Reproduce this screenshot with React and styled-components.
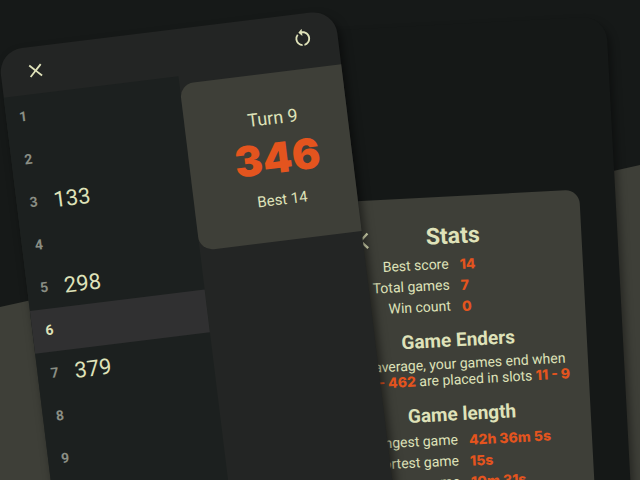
import React from "react";
import styled, { createGlobalStyle } from "styled-components";
import { MdClose, MdRestartAlt } from "react-icons/md";

const COLORS = {
  background: "#161918",
  screen: "#151817",
  phone: "#232524",
  list: "#1c201f",
  active: "#303031",
  card: "#3e3f38",
  text: "#dfe2b9",
  muted: "#8a8e84",
  accent: "#e4541e",
};

const SLOTS = [null, null, 133, null, 298, null, 379, null, null];
const ACTIVE_SLOT = 6;

const SCORES = [
  ["Best score", "14"],
  ["Total games", "7"],
  ["Win count", "0"],
];

const LENGTHS = [
  ["Longest game", "42h 36m 5s"],
  ["Shortest game", "15s"],
  ["Average game", "10m 31s"],
];

const StatList = ({ items }) => (
  <Stats>
    {items.map(([label, value]) => (
      <React.Fragment key={label}>
        <StatLabel>{label}</StatLabel>
        <StatValue>{value}</StatValue>
      </React.Fragment>
    ))}
  </Stats>
);

const StatsPhone = () => (
  <BackPhone>
    <StatsCard>
      <StatsHeader>
        <IconButton aria-label="Close stats">
          <MdClose size={28} />
        </IconButton>
        <Title>Stats</Title>
      </StatsHeader>
      <StatList items={SCORES} />
      <Heading>Game Enders</Heading>
      <Summary>
        On average, your games end when <Accent>431 - 462</Accent> are placed
        in slots <Accent>11 - 9</Accent>
      </Summary>
      <Heading>Game length</Heading>
      <StatList items={LENGTHS} />
    </StatsCard>
  </BackPhone>
);

const GamePhone = () => (
  <FrontPhone>
    <Toolbar>
      <IconButton aria-label="Quit game">
        <MdClose size={22} />
      </IconButton>
      <IconButton aria-label="Restart game">
        <MdRestartAlt size={22} />
      </IconButton>
    </Toolbar>
    <Board>
      <SlotList>
        {SLOTS.map((value, i) => (
          <Slot key={i} $active={i + 1 === ACTIVE_SLOT}>
            <SlotNumber $active={i + 1 === ACTIVE_SLOT}>{i + 1}</SlotNumber>
            <SlotValue>{value}</SlotValue>
          </Slot>
        ))}
      </SlotList>
      <TurnCard>
        <Turn>Turn 9</Turn>
        <Draw>346</Draw>
        <Best>Best 14</Best>
      </TurnCard>
    </Board>
  </FrontPhone>
);

const App = () => {
  return (
    <Stage>
      <GlobalStyle />
      <Slope />
      <StatsPhone />
      <GamePhone />
    </Stage>
  );
};

const GlobalStyle = createGlobalStyle`
  * {
    box-sizing: border-box;
  }

  body {
    margin: 0;
    background-color: ${COLORS.background};
    color: ${COLORS.text};
    font-family: Roboto, "Liberation Sans", sans-serif;
  }
`;

const Stage = styled.main`
  position: relative;
  height: 100vh;
  overflow: hidden;
`;

/* slanted ground behind the phones */
const Slope = styled.div`
  position: absolute;
  top: 64%;
  left: 0;
  width: 100%;
  height: 150%;
  background-color: ${COLORS.card};
  transform: skewY(-12.5deg);
  transform-origin: top left;
`;

const Phone = styled.section`
  position: absolute;
  min-height: 130vh;
  border-radius: 24px;
`;

const BackPhone = styled(Phone)`
  top: 16px;
  right: 34px;
  width: 52%;
  padding: 172px 36px 0;
  background-color: ${COLORS.screen};
  box-shadow: 3px 6px 8px rgba(0, 0, 0, 0.4);
  transform: rotate(-3deg);
  transform-origin: top right;
`;

const FrontPhone = styled(Phone)`
  top: 51px;
  left: -2px;
  width: 53%;
  background-color: ${COLORS.phone};
  box-shadow: 3px 6px 10px rgba(0, 0, 0, 0.5);
  transform: rotate(-7deg);
  transform-origin: top left;
`;

const Toolbar = styled.header`
  display: flex;
  align-items: center;
  justify-content: space-between;
  height: 47px;
  padding: 0 24px;
`;

const IconButton = styled.button`
  display: flex;
  padding: 0;
  border: none;
  background: none;
  color: ${COLORS.text};
  cursor: pointer;
`;

const Board = styled.div`
  display: grid;
  grid-template-columns: 52% 48%;
  align-items: start;
`;

const SlotList = styled.ol`
  min-height: 120vh;
  margin: 0;
  padding: 0;
  list-style: none;
  background-color: ${COLORS.list};
`;

const Slot = styled.li`
  display: flex;
  align-items: center;
  height: 43px;
  padding: 0 0 1px 13px;
  background-color: ${({ $active }) =>
    $active ? COLORS.active : "transparent"};
`;

const SlotNumber = styled.span`
  width: 24px;
  font-size: 14px;
  font-weight: 700;
  color: ${({ $active }) => ($active ? COLORS.text : COLORS.muted)};
`;

const SlotValue = styled.span`
  font-size: 22px;
`;

const TurnCard = styled.div`
  display: flex;
  flex-direction: column;
  align-items: center;
  justify-content: center;
  min-height: 168px;
  margin-top: 8px;
  padding: 3px 0 0 13px;
  border-radius: 14px 0 0 14px;
  background-color: ${COLORS.card};
`;

const Turn = styled.div`
  font-size: 18px;
  line-height: 24px;
`;

const Draw = styled.div`
  margin: 4px 0 6px;
  font-family: Inter, Roboto, sans-serif;
  font-size: 42px;
  font-weight: 900;
  line-height: 48px;
  color: ${COLORS.accent};
`;

const Best = styled.div`
  font-size: 15px;
  line-height: 24px;
`;

const StatsCard = styled.div`
  padding: 26px 14px 26px 18px;
  min-height: 100vh;
  border-radius: 14px;
  background-color: ${COLORS.card};
`;

const StatsHeader = styled.header`
  display: grid;
  grid-template-columns: 36px 1fr 36px;
  align-items: center;
  margin-bottom: 3px;
  padding: 0 8px;
`;

const Title = styled.h1`
  margin: 0;
  font-size: 23px;
  font-weight: 700;
  line-height: 28px;
  text-align: center;
`;

const Heading = styled.h2`
  margin: 12px 0 3px;
  font-size: 19px;
  font-weight: 700;
  line-height: 24px;
  text-align: center;
`;

const Stats = styled.dl`
  display: grid;
  grid-template-columns: 1fr 1fr;
  column-gap: 11px;
  margin: 0;
  font-size: 14px;
  line-height: 21px;
`;

const StatLabel = styled.dt`
  text-align: right;
  white-space: nowrap;
`;

const StatValue = styled.dd`
  margin: 0;
  font-family: Inter, Roboto, sans-serif;
  font-weight: 800;
  white-space: nowrap;
  color: ${COLORS.accent};
`;

const Summary = styled.p`
  margin: 0 0 15px;
  font-size: 14px;
  line-height: 16px;
  text-align: center;
`;

const Accent = styled.strong`
  font-family: Inter, Roboto, sans-serif;
  font-weight: 800;
  color: ${COLORS.accent};
`;

export default App;
